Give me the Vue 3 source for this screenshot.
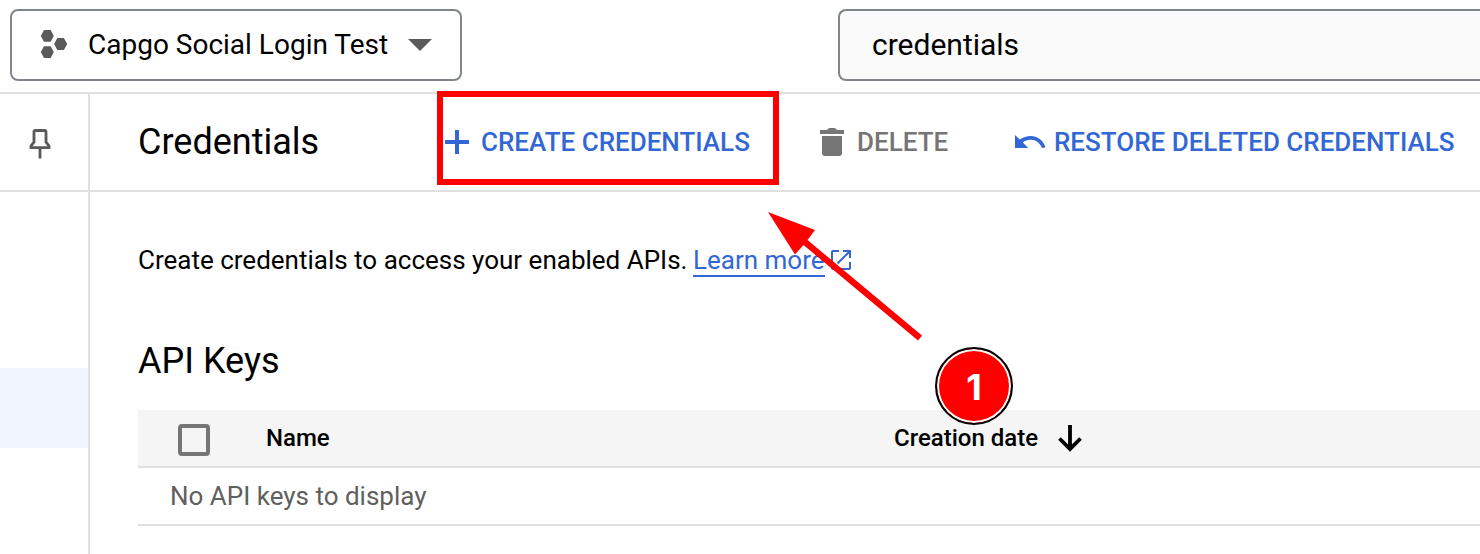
<script setup>
const columns = { name: 'Name', date: 'Creation date' }
</script>

<template>
  <div class="page">
    <header class="topbar">
      <button class="project">
        <svg class="hexes" width="28" height="30" viewBox="0 0 28 30">
          <path d="M4 0h6.600l3.200 5.900-3.200 5.900H4L.8 5.900zM4 16.200h6.600l3.200 5.900-3.200 5.900H4L.8 22.100zM17.300 8h6.600l3.300 6-3.300 6h-6.600l-3.200-6z" />
        </svg>
        <span class="project-name">Capgo Social Login Test</span>
        <svg class="caret" width="24" height="12" viewBox="0 0 24 12"><path d="M0 0h24L12 12z" /></svg>
      </button>
      <div class="search"><span>credentials</span></div>
    </header>

    <div class="body">
      <aside class="sidebar">
        <div class="pin">
          <svg width="22" height="30" viewBox="0 0 22 30">
            <path d="M2 18.700v-1.700l3-4V3q0-1.500 1.500-1.500h9Q17 1.500 17 3v10l3 4v1.700zM11 18.700v10.800" fill="none" stroke="#5a5a5a" stroke-width="2.800" />
          </svg>
        </div>
        <div class="selected"></div>
      </aside>

      <main class="main">
        <div class="toolbar">
          <h1>Credentials</h1>
          <button class="action create">
            <svg width="24" height="24" viewBox="0 0 24 24"><path d="M10 0h4v10h10v4H14v10h-4V14H0v-4h10z" /></svg>
            <span>CREATE CREDENTIALS</span>
          </button>
          <button class="action delete">
            <svg width="24" height="28" viewBox="0 0 24 28"><path d="M0 2h7q1-2 3-2h4q2 0 3 2h7v4H0zM2 8h20v17q0 3-3 3H5q-3 0-3-3z" /></svg>
            <span>DELETE</span>
          </button>
          <button class="action restore">
            <svg width="31" height="14" viewBox="0 0 31 14"><path d="M0 0l4.800 4.500C8 2.200 12 1 15.500 1c6.800 0 12.300 4.200 14.700 10.300.4 1.100-.2 1.700-3.200 1.700C25 8 21 4.700 15.500 4.700c-3 0-5.700 1-7.700 2.800l5.500 5.500H0z" /></svg>
            <span>RESTORE DELETED CREDENTIALS</span>
          </button>
        </div>

        <p class="intro">
          <span class="intro-text">Create credentials to access your enabled APIs.</span>
          <a class="learn">Learn more</a>
          <svg class="external" width="20" height="20" viewBox="0 0 20 20">
            <path d="M8 1H2Q1 1 1 2v16q0 1 1 1h16q1 0 1-1v-6M12 1h7v7M19 1L6.500 13.500" fill="none" stroke="#3367d6" stroke-width="2" />
          </svg>
        </p>

        <h2>API Keys</h2>

        <div class="table">
          <div class="head">
            <span class="checkbox"></span>
            <span class="col-name">{{ columns.name }}</span>
            <span class="col-date">{{ columns.date }}</span>
            <svg width="24" height="27" viewBox="0 0 24 27">
              <path d="M12 0v24M1.500 13.500L12 24l10.500-10.500" fill="none" stroke="#000" stroke-width="3.800" />
            </svg>
          </div>
          <div class="empty"><span>No API keys to display</span></div>
        </div>
      </main>
    </div>

    <div class="highlight"></div>
    <svg class="arrow" width="160" height="134" viewBox="0 0 160 134">
      <path d="M0 0L47 18 39.500 28 154 123.500 150 128.500 35.500 33 27 42.500z" fill="#f00" />
    </svg>
    <div class="step"><span>1</span></div>
  </div>
</template>

<style>
body {
  background: #fff;
  overflow: hidden;
}
</style>

<style scoped>
* {
  box-sizing: border-box;
}
.page {
  position: relative;
  width: 1480px;
  height: 554px;
  overflow: hidden;
  display: flex;
  flex-direction: column;
  background: #fff;
  color: #000;
  font-family: Roboto, "Liberation Sans", sans-serif;
  white-space: nowrap;
}
svg {
  display: block;
  flex: none;
}
button {
  font: inherit;
  background: none;
  border: 0;
  padding: 0;
}
.topbar {
  flex: none;
  height: 94px;
  border-bottom: 2px solid #e0e0e0;
  padding: 9px 0 0 10px;
  display: flex;
  justify-content: space-between;
}
.project {
  width: 452px;
  height: 72px;
  border: 2px solid #80868b;
  border-radius: 8px;
  display: flex;
  align-items: center;
  padding-left: 28px;
  color: #000;
}
.hexes,
.caret {
  fill: #5a5a5a;
}
.project-name {
  font-size: 28px;
  line-height: 34px;
  width: 300px;
  margin: 0 20px;
  text-align: left;
}
.search {
  width: 642px;
  height: 72px;
  border: 2px solid #80868b;
  border-right: 0;
  border-radius: 8px 0 0 8px;
  background: #fafafa;
  display: flex;
  align-items: center;
  padding: 0 0 2px 32px;
  font-size: 30px;
}
.body {
  flex: 1;
  display: flex;
}
.sidebar {
  width: 90px;
  flex: none;
  border-right: 2px solid #e0e0e0;
}
.pin {
  height: 98px;
  border-bottom: 2px solid #e0e0e0;
  padding: 35px 0 0 29px;
}
.selected {
  margin-top: 176px;
  height: 80px;
  background: #f0f5ff;
}
.main {
  flex: 1;
  min-width: 0;
}
.toolbar {
  height: 98px;
  border-bottom: 2px solid #e0e0e0;
  display: flex;
  align-items: center;
  padding-left: 48px;
}
h1,
h2 {
  margin: 0;
  font-size: 36px;
  font-weight: 400;
  line-height: 42px;
}
h1 {
  width: 307px;
}
.action {
  display: flex;
  align-items: center;
  font-size: 26px;
  font-weight: 500;
  line-height: 30px;
  color: #3367d6;
  fill: #3367d6;
}
.create {
  width: 375px;
  gap: 12px;
}
.delete {
  width: 195px;
  gap: 13px;
  color: #757575;
  fill: #757575;
}
.restore {
  gap: 8px;
}
.intro {
  margin: 52px 0 0;
  padding-left: 48px;
  height: 34px;
  display: flex;
  align-items: flex-start;
  font-size: 26px;
  line-height: 32px;
}
.intro-text {
  width: 555px;
}
.learn {
  width: 132px;
  height: 33px;
  color: #3367d6;
  border-bottom: 2px solid #3367d6;
}
.external {
  margin: 6px 0 0 6px;
}
h2 {
  margin: 62px 0 0 48px;
}
.table {
  margin: 28px 0 0 48px;
}
.head {
  height: 58px;
  background: #f5f5f5;
  border-bottom: 2px solid #e0e0e0;
  display: flex;
  align-items: center;
  padding-left: 40px;
  font-size: 24px;
  font-weight: 500;
}
.checkbox {
  width: 32px;
  height: 32px;
  margin-top: 4px;
  border: 4px solid #757575;
  border-radius: 4px;
}
.col-name {
  margin-left: 56px;
  width: 628px;
}
.col-date {
  width: 164px;
}
.empty {
  height: 58px;
  border-bottom: 2px solid #e0e0e0;
  display: flex;
  align-items: center;
  padding-left: 32px;
  font-size: 26px;
  color: #5f5f5f;
}
.highlight {
  position: absolute;
  left: 437px;
  top: 91px;
  width: 342px;
  height: 94px;
  border: 6px solid #f00;
}
.arrow {
  position: absolute;
  left: 768px;
  top: 212px;
}
.step {
  position: absolute;
  left: 935px;
  top: 347px;
  width: 78px;
  height: 78px;
  border: 2px solid #000;
  border-radius: 50%;
  background: #f00;
  box-shadow: inset 0 0 0 2px #fff;
  display: flex;
  align-items: center;
  justify-content: center;
  padding-top: 2px;
  color: #fff;
  font: 700 36px Inter, sans-serif;
}
</style>
